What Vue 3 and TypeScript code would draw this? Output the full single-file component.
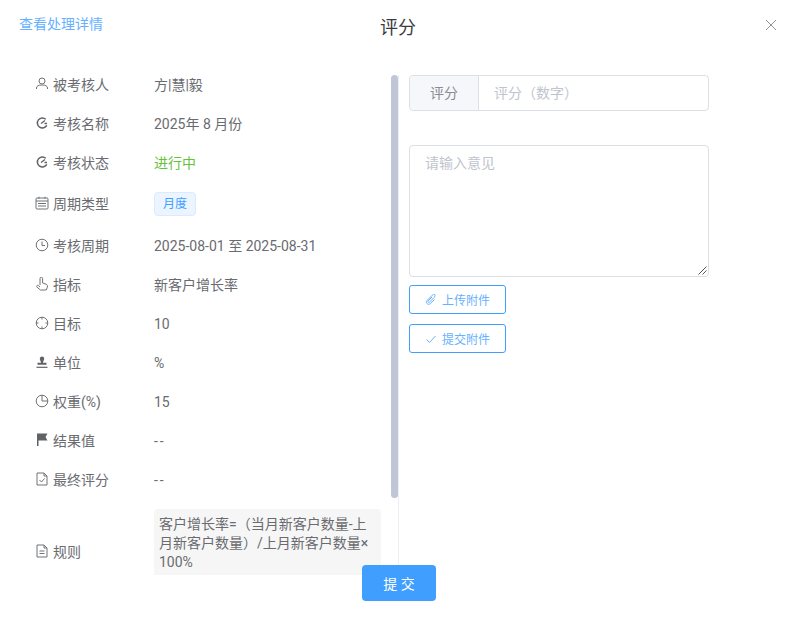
<script setup lang="ts">
const rows = [
  { icon: 'user', label: '被考核人', value: '方|慧|毅' },
  { icon: 'gauge', label: '考核名称', value: '2025年 8 月份' },
  { icon: 'gauge', label: '考核状态', value: '进行中', cls: 'green' },
  { icon: 'date', label: '周期类型', value: '月度', tag: true },
  { icon: 'clock', label: '考核周期', value: '2025-08-01 至 2025-08-31' },
  { icon: 'hand', label: '指标', value: '新客户增长率' },
  { icon: 'aim', label: '目标', value: '10' },
  { icon: 'stamp', label: '单位', value: '%' },
  { icon: 'pie', label: '权重(%)', value: '15' },
  { icon: 'flag', label: '结果值', value: '--', cls: 'dash' },
  { icon: 'check', label: '最终评分', value: '--', cls: 'dash' },
]
</script>

<template>
  <div class="dialog">
    <header class="head">
      <a class="link">查看处理详情</a>
      <h1 class="title">评分</h1>
      <svg class="close" viewBox="0 0 12 12" width="12" height="12">
        <path d="M1 1l10 10M11 1L1 11" stroke="#909399" stroke-width="1" fill="none" />
      </svg>
    </header>
    <main class="body">
      <section class="left">
        <div v-for="r in rows" :key="r.label" class="row" :class="{ tall: r.tag }">
          <span class="label">
            <svg class="ic" viewBox="0 0 14 14" width="14" height="14" fill="none" stroke="#707276" stroke-width="1">
              <template v-if="r.icon === 'user'">
                <circle cx="7" cy="4" r="3" /><path d="M1.500 12v-1c0-2 2-3 5.500-3s5.500 1 5.500 3v1" />
              </template>
              <template v-else-if="r.icon === 'gauge'">
                <path d="M11.800 9.300A5 5 0 1 1 10.800 3.300" stroke="#606266" stroke-width="1.500" /><path d="M6 7.500L10 4.500M9.500 7.500h2.500" stroke="#606266" stroke-width="1.300" />
              </template>
              <template v-else-if="r.icon === 'date'">
                <rect x="1" y="2" width="12" height="11" rx="1" /><path d="M1 5h12M3 7.500h8M3 10h8M4 .8v2M10 .8v2" />
              </template>
              <template v-else-if="r.icon === 'clock'">
                <circle cx="7" cy="7" r="5.800" /><path d="M7 3.500V7.500H10" />
              </template>
              <template v-else-if="r.icon === 'hand'">
                <path d="M5 8V1.500a1.300 1.300 0 0 1 2.600 0V6l3.400 1.200c1 .4 1.500 1 1.500 1.800 0 1.200-.5 2.500-1.300 4H5.500L1.800 10c-.7-1 .6-2.200 1.600-1.500L5 10" />
              </template>
              <template v-else-if="r.icon === 'aim'">
                <circle cx="7" cy="7" r="5.800" /><path d="M7 1v2.500M7 10.500V13M1 7h2.500M10.500 7H13" />
              </template>
              <template v-else-if="r.icon === 'stamp'">
                <path d="M7 1.500c1.500 0 2.200 1 2.200 2.200 0 1.600-1.200 2.500-1.200 4h3.500v2h-9v-2H6c0-1.500-1.200-2.400-1.200-4C4.800 2.500 5.500 1.500 7 1.500z" fill="#606266" stroke="none" /><path d="M1.500 12.300h11" stroke="#606266" stroke-width="1.200" />
              </template>
              <template v-else-if="r.icon === 'pie'">
                <circle cx="7" cy="7" r="5.800" /><path d="M7 1.200V7H12.800" />
              </template>
              <template v-else-if="r.icon === 'flag'">
                <path d="M2 .5H12.500L10.500 4 12.500 7.500H3.500V13H2z" fill="#606266" stroke="none" />
              </template>
              <template v-else>
                <path d="M2 1h7l3 3v9H2zM9 1v3h3" /><path d="M4.500 8l2 2 3-3.500" />
              </template>
            </svg>
            {{ r.label }}
          </span>
          <span v-if="r.tag" class="tag">{{ r.value }}</span>
          <span v-else class="value" :class="r.cls">{{ r.value }}</span>
        </div>
        <div class="row rule-row">
          <span class="label">
            <svg class="ic" viewBox="0 0 14 14" width="14" height="14" fill="none" stroke="#707276" stroke-width="1">
              <path d="M2 1h7l3 3v9H2zM9 1v3h3M4.500 7h5M4.500 9.500h5" />
            </svg>
            规则
          </span>
          <div class="rule">客户增长率=（当月新客户数量-上月新客户数量）/上月新客户数量×<wbr />100%</div>
        </div>
      </section>
      <div class="thumb"></div>
      <section class="right">
        <div class="group">
          <span class="prepend">评分</span>
          <span class="input">评分（数字）</span>
        </div>
        <div class="area">
          请输入意见
          <svg class="grip" viewBox="0 0 9 9" width="9" height="9">
            <path d="M8.500 .5L.5 8.500M8.500 4.500L4.500 8.500" stroke="#555" stroke-width="1" fill="none" />
          </svg>
        </div>
        <button class="btn" type="button">
          <svg viewBox="0 0 12 12" width="12" height="12" fill="none" stroke="#66b1ff" stroke-width="1">
            <path d="M7 3L3.200 6.800c-.9.9.4 2.200 1.300 1.300L9.500 3.200C11-.3 8.800-.3 7.300 1.200L2 6.500c-2 2 1.200 5.200 3.200 3.200L9.500 5.500" />
          </svg>
          上传附件
        </button>
        <button class="btn" type="button">
          <svg viewBox="0 0 12 12" width="12" height="12" fill="none" stroke="#66b1ff" stroke-width="1">
            <path d="M1.500 6.500L4.500 9.500 10.500 3" />
          </svg>
          提交附件
        </button>
      </section>
    </main>
    <button class="submit" type="button">提 交</button>
  </div>
</template>

<style scoped>
.dialog {
  position: relative;
  width: 795px;
  height: 620px;
  overflow: hidden;
  background: #fff;
  font-family: Roboto, "Noto Sans CJK SC", sans-serif;
  font-size: 14px;
  font-variant-ligatures: none;
  color: #696b70;
}
.head {
  position: relative;
  height: 75px;
}
.link {
  position: absolute;
  left: 19px;
  top: 14px;
  line-height: 20px;
  color: #66b1ff;
}
.title {
  margin: 0;
  padding-top: 16px;
  padding-left: 1px;
  text-align: center;
  font-size: 18px;
  font-weight: 400;
  line-height: 24px;
  color: #3a3b3e;
}
.close {
  position: absolute;
  left: 765px;
  top: 19px;
}
.body {
  position: relative;
  display: flex;
  height: 500px;
}
.left {
  box-sizing: border-box;
  width: 399px;
  height: 500px;
  padding-left: 35px;
  padding-right: 17px;
  overflow: hidden;
  border-right: 1px solid #ebeef5;
}
.thumb {
  position: absolute;
  left: 391px;
  top: 0;
  width: 7px;
  height: 423px;
  background: #c1c6d6;
  border-radius: 4px;
}
.row {
  display: flex;
  align-items: center;
  min-height: 20px;
  line-height: 20px;
  margin-bottom: 19px;
}
.row.tall {
  min-height: 24px;
  margin-bottom: 20px;
}
.label {
  display: flex;
  align-items: center;
  gap: 4px;
  width: 119px;
  flex: none;
}
.ic {
  flex: none;
  margin-top: -3px;
}
.dash {
  letter-spacing: 2px;
}
.green {
  color: #67c23a;
}
.tag {
  box-sizing: border-box;
  height: 24px;
  padding: 0 8px;
  line-height: 22px;
  font-size: 12px;
  color: #409eff;
  background: #ecf5ff;
  border: 1px solid #d9ecff;
  border-radius: 4px;
}
.rule-row {
  margin-bottom: 0;
}
.rule {
  box-sizing: border-box;
  width: 227px;
  height: 86px;
  flex: none;
  padding: 6px 5px;
  line-height: 19px;
  background: #f6f6f6;
  border-radius: 4px;
}
.right {
  display: flex;
  flex-direction: column;
  align-items: flex-start;
  width: 300px;
  margin-left: 10px;
}
.group {
  display: flex;
  box-sizing: border-box;
  width: 300px;
  height: 36px;
  border: 1px solid #dcdfe6;
  border-radius: 4px;
  line-height: 34px;
}
.prepend {
  width: 68px;
  text-align: center;
  background: #f5f7fa;
  border-right: 1px solid #dcdfe6;
  border-radius: 4px 0 0 4px;
  color: #888b91;
}
.input {
  padding-left: 15px;
  color: #c0c4cc;
}
.area {
  position: relative;
  box-sizing: border-box;
  width: 300px;
  height: 132px;
  margin-top: 34px;
  padding: 7px 15px;
  line-height: 20px;
  color: #c0c4cc;
  border: 1px solid #dcdfe6;
  border-radius: 4px;
}
.grip {
  position: absolute;
  right: 1px;
  bottom: 1px;
}
.btn {
  display: flex;
  align-items: center;
  justify-content: center;
  gap: 5px;
  width: 97px;
  height: 29px;
  margin-top: 8px;
  padding: 0;
  font: inherit;
  font-size: 12px;
  color: #66b1ff;
  background: #fff;
  border: 1px solid #409eff;
  border-radius: 3px;
}
.btn + .btn {
  margin-top: 10px;
}
.submit {
  position: absolute;
  left: 362px;
  top: 565px;
  width: 74px;
  height: 36px;
  padding: 0;
  font: inherit;
  color: #fff;
  background: #409eff;
  border: 0;
  border-radius: 4px;
}
</style>
